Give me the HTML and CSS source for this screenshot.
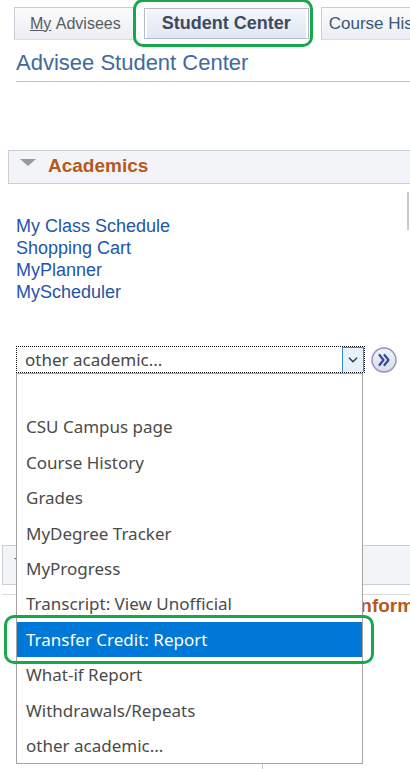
FILE: index.html
```html
<!DOCTYPE html>
<html>
<head>
<meta charset="utf-8">
<link rel="stylesheet" href="styles.css">
</head>
<body>
<div class="page">
  <div class="tabs">
    <div class="tab"><span class="u">My</span>&nbsp;Advisees</div>
    <div class="tab active">Student Center</div>
    <div class="tab last">Course History</div>
  </div>
  <h1 class="title">Advisee Student Center</h1>
  <div class="rule"></div>

  <div class="section-bar acad">
    <span class="tri"></span>
    <span class="sec-title">Academics</span>
  </div>
  <div class="acad-body">
    <ul class="links">
      <li>My Class Schedule</li>
      <li>Shopping Cart</li>
      <li>MyPlanner</li>
      <li>MyScheduler</li>
    </ul>
    <div class="side"></div>
  </div>

  <div class="select-row">
    <div class="select">
      <span class="sel-text">other academic...</span>
      <span class="arrow"><svg width="10" height="6" viewBox="0 0 10 6"><path d="M1 0.8 L5 4.8 L9 0.8" fill="none" stroke="#333" stroke-width="1.3"/></svg></span>
    </div>
    <svg class="go" width="26" height="26" viewBox="0 0 26 26">
      <defs><linearGradient id="g" x1="0" y1="0" x2="0" y2="1"><stop offset="0" stop-color="#f1f2f8"/><stop offset="1" stop-color="#d9ddec"/></linearGradient></defs>
      <circle cx="13" cy="13" r="12" fill="url(#g)" stroke="#8b92b6" stroke-width="1.4"/>
      <path d="M8.5 8 L12.5 13 L8.5 18 M13.5 8 L17.5 13 L13.5 18" fill="none" stroke="#3548a0" stroke-width="2.2" stroke-linecap="round" stroke-linejoin="round"/>
    </svg>
    <ul class="options">
      <li>&nbsp;</li>
      <li>CSU Campus page</li>
      <li>Course History</li>
      <li>Grades</li>
      <li>MyDegree Tracker</li>
      <li>MyProgress</li>
      <li>Transcript: View Unofficial</li>
      <li class="selected">Transfer Credit: Report</li>
      <li>What-if Report</li>
      <li>Withdrawals/Repeats</li>
      <li>other academic...</li>
    </ul>
  </div>

  <div class="section-bar second">
    <span class="tri dark"></span>
  </div>
  <div class="sec2-body">
    <div class="col-left"></div>
    <div class="col-right"><div class="sub-title">Contact Information</div></div>
  </div>

  <div class="hl hl-tab"></div>
  <div class="hl hl-opt"></div>
</div>
</body>
</html>
```

FILE: styles.css
```css
html, body {
  margin: 0;
  padding: 0;
  background: #fff;
  overflow: hidden;
}

.page {
  position: relative;
  width: 410px;
  height: 769px;
  overflow: hidden;
  font-family: "Liberation Sans", Arial, sans-serif;
}

/* Tabs */
.tabs {
  display: flex;
  align-items: flex-start;
  height: 40px;
  box-sizing: border-box;
  padding: 7px 0 0 14px;
  white-space: nowrap;
}

.tab {
  height: 33px;
  box-sizing: border-box;
  border: 1px solid #c9ced6;
  border-bottom-color: #d6dde8;
  background: linear-gradient(#fbfbfc, #eceef2);
  font-size: 16px;
  color: #565b63;
  padding: 0 14px 0 15px;
  display: flex;
  align-items: center;
  flex: none;
}

.tab .u {
  text-decoration: underline;
}

.tab.active {
  margin-left: 8px;
  margin-top: 1px;
  height: 31px;
  border-color: #b3bccb;
  background: linear-gradient(#f4f7fb, #dfe7f2);
  box-shadow: inset 2px 0 0 #fff, inset -2px 0 0 #fff;
  font-weight: bold;
  font-size: 18px;
  color: #3d4a61;
  padding: 0 17px 0 17px;
}

.tab.last {
  margin-left: 12px;
  padding-left: 7px;
  font-size: 17px;
  color: #3b5778;
}

/* Title */
.title {
  margin: 10px 0 0 16px;
  font-weight: normal;
  font-size: 22px;
  line-height: 26px;
  color: #41699d;
}

.rule {
  margin: 5px 0 0 16px;
  border-top: 1px solid #c2c2c2;
}

/* Section bars */
.section-bar {
  display: flex;
  align-items: center;
  box-sizing: border-box;
  background: #f2f4f7;
  border: 1px solid #cbced3;
  border-right: none;
}

.section-bar.acad {
  margin: 68px 0 0 8px;
  height: 34px;
}

.section-bar.second {
  margin: 172px 0 0 2px;
  height: 40px;
}

.tri {
  width: 0;
  height: 0;
  border-left: 8px solid transparent;
  border-right: 8px solid transparent;
  border-top: 7px solid #9a9a9a;
  margin: 0 12px 10px 11px;
}

.tri.dark {
  border-top-color: #666;
  margin-bottom: 8px;
}

.sec-title {
  font-weight: bold;
  font-size: 19px;
  color: #b6591c;
  line-height: 24px;
  margin-bottom: 2px;
}

/* Academics body */
.acad-body {
  display: flex;
  margin-top: 8px;
}

.links {
  list-style: none;
  margin: 0;
  padding: 23px 0 0 16px;
}

.links li {
  font-size: 18px;
  line-height: 22px;
  color: #1e56a9;
}

.side {
  margin-left: auto;
  width: 1px;
  height: 38px;
  border-left: 2px solid #c9c9c9;
}

/* Select */
.select-row {
  position: relative;
  display: flex;
  align-items: center;
  margin-top: 43px;
  padding-left: 16px;
}

.select {
  width: 349px;
  height: 27px;
  box-sizing: border-box;
  border: 1px dotted #111;
  display: flex;
  align-items: stretch;
  background: #fff;
}

.sel-text {
  font-family: "Noto Sans", sans-serif;
  font-size: 17px;
  line-height: 25px;
  color: #474747;
  padding-left: 8px;
}

.arrow {
  margin-left: auto;
  width: 22px;
  box-sizing: border-box;
  background: #e5f0fb;
  border: 1px solid #3a88dd;
  border-bottom: none;
  display: flex;
  align-items: center;
  justify-content: center;
}

.go {
  margin-left: 6px;
  flex: none;
}

.options {
  position: absolute;
  top: 27px;
  left: 16px;
  width: 347px;
  box-sizing: border-box;
  margin: 0;
  padding: 0;
  list-style: none;
  background: #fff;
  border: 1px solid #a4a4a4;
  z-index: 5;
}

.options li {
  height: 35.4px;
  line-height: 35.4px;
  padding-left: 9px;
  font-family: "Noto Sans", sans-serif;
  font-size: 17px;
  color: #4b4b4b;
  white-space: nowrap;
}

.options li.selected {
  background: #0078d7;
  color: #fff;
}

/* Second section body */
.sec2-body {
  display: flex;
  margin: 9px 0 0 2px;
  border-top: 1px solid #d9d9d9;
}

.col-left {
  flex: none;
  width: 260px;
  height: 200px;
  border-right: 1px solid #c8c8c8;
}

.col-right {
  flex: none;
  padding-left: 16px;
}

.sub-title {
  font-weight: bold;
  font-size: 19px;
  line-height: 22px;
  color: #b6591c;
  white-space: nowrap;
}

/* Green highlight annotations */
.hl {
  position: absolute;
  box-sizing: border-box;
  border: 3px solid #17a84c;
  border-radius: 10px;
  z-index: 10;
}

.hl-tab {
  left: 133px;
  top: -1px;
  width: 180px;
  height: 48px;
}

.hl-opt {
  left: 4px;
  top: 615px;
  width: 370px;
  height: 49px;
}
```
